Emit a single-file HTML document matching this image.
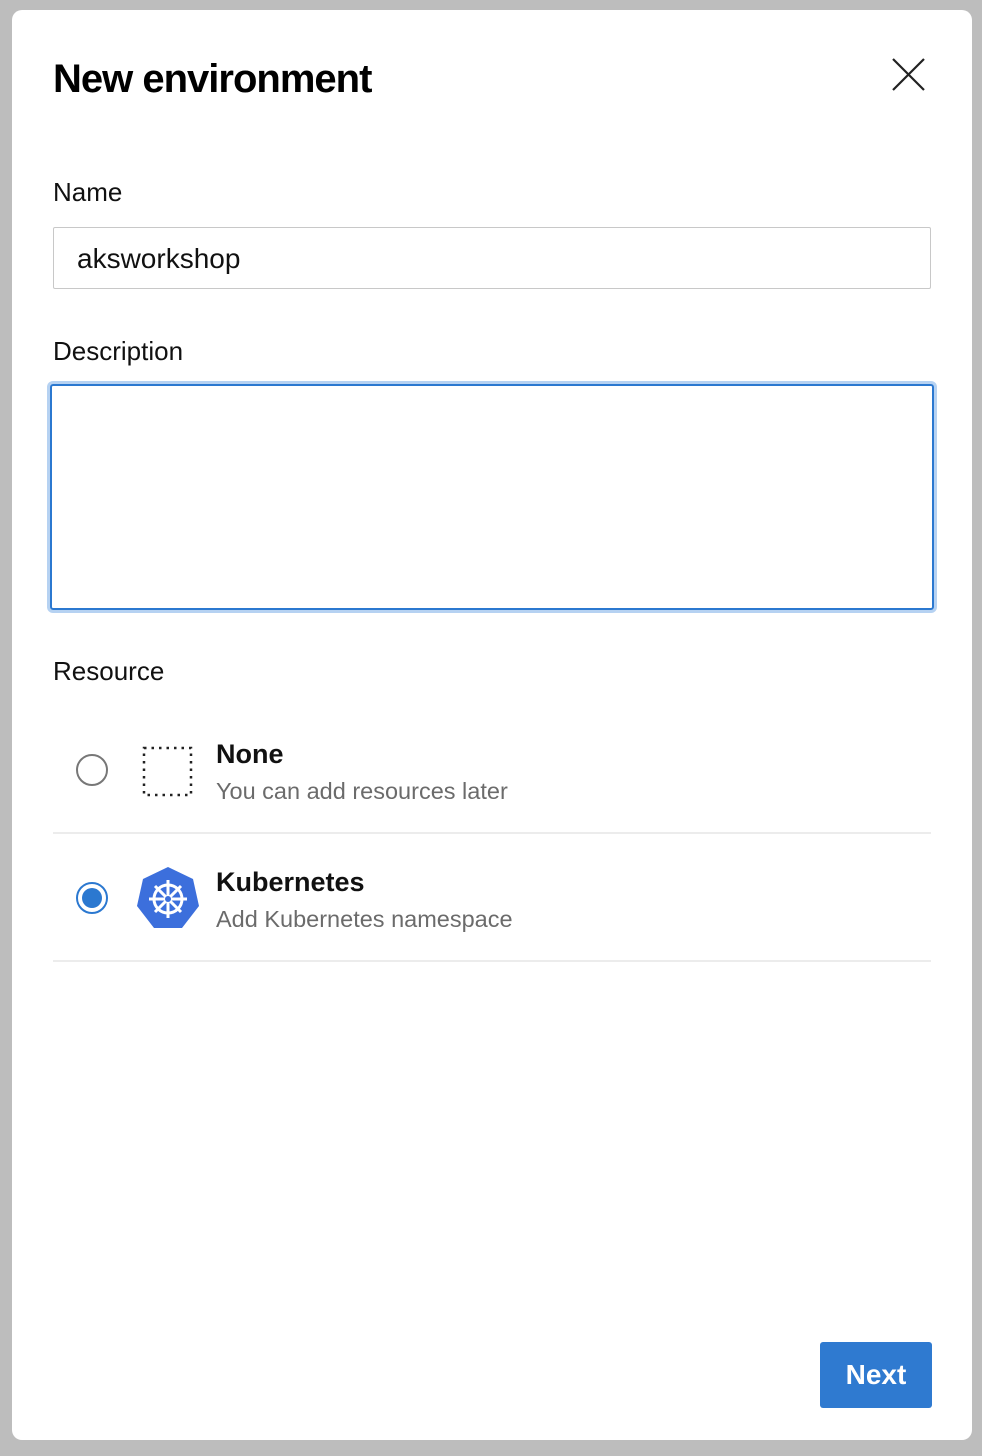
<!DOCTYPE html>
<html><head><style>
body{margin:0;width:982px;height:1456px;background:#bdbdbd;position:relative;overflow:hidden;font-family:"Liberation Sans",sans-serif;}
.dlg{position:absolute;left:12px;top:10px;width:960px;height:1430px;background:#fff;border-radius:10px;}
.t{position:absolute;left:41px;top:47px;font-size:40px;font-weight:bold;letter-spacing:-1px;color:#000;}
.lbl{position:absolute;left:41px;font-size:26px;color:#111;}
.inp{position:absolute;left:41px;top:217px;width:876px;height:60px;border:1px solid #c8c8c8;border-radius:2px;}
.inp span{position:absolute;left:23px;top:15px;font-size:28px;color:#111;}
.ta{position:absolute;left:38px;top:374px;width:880px;height:222px;border:2px solid #2b78d0;box-shadow:0 0 0 3px #b6d2f2;border-radius:3px;}
.radio{position:absolute;left:64px;width:28px;height:28px;border:2px solid #777;border-radius:50%;}
.sel{border-color:#2b78d0;background:#fff;}
.sel::after{content:"";position:absolute;left:4px;top:4px;width:20px;height:20px;border-radius:50%;background:#2b78d0;}
.h{position:absolute;left:204px;font-size:27px;font-weight:bold;color:#111;}
.s{position:absolute;left:204px;font-size:23.5px;color:#6b6b6b;}
.line{position:absolute;left:41px;width:878px;height:2px;background:#ececec;}
.btn{position:absolute;left:808px;top:1332px;width:112px;height:66px;background:#2f7ad0;border-radius:3px;color:#fff;font-size:28px;font-weight:bold;text-align:center;line-height:66px;}
</style></head><body>
<div class="dlg">
<div class="t">New environment</div>
<svg style="position:absolute;left:880px;top:48px" width="33" height="33"><path d="M1 1L32 32M32 1L1 32" stroke="#222" stroke-width="2.2"/></svg>
<div class="lbl" style="top:167px">Name</div>
<div class="inp"><span>aksworkshop</span></div>
<div class="lbl" style="top:326px">Description</div>
<div class="ta"></div>
<div class="lbl" style="top:646px">Resource</div>
<div class="radio" style="top:744px"></div>
<svg style="position:absolute;left:130px;top:736px" width="52" height="52"><rect x="2" y="2" width="47" height="47" fill="none" stroke="#222" stroke-width="2.5" stroke-dasharray="2.5 5"/></svg>
<div class="h" style="top:729px">None</div>
<div class="s" style="top:768px">You can add resources later</div>
<div class="line" style="top:822px"></div>
<div class="radio sel" style="top:872px"></div>
<svg style="position:absolute;left:124px;top:856px" width="64" height="64" viewBox="0 0 64 64"><polygon points="32,1 57,13 63,40 46,62 18,62 1,40 7,13" fill="#3c6fdc"/><g stroke="#fff" stroke-width="3" fill="none"><circle cx="32" cy="33" r="14"/><path d="M32 14V52M13 33H51M19 20L45 46M45 20L19 46"/></g><circle cx="32" cy="33" r="3" fill="#3c6fdc"/></svg>
<div class="h" style="top:857px">Kubernetes</div>
<div class="s" style="top:896px">Add Kubernetes namespace</div>
<div class="line" style="top:950px"></div>
<div class="btn">Next</div>
</div>
</body></html>
